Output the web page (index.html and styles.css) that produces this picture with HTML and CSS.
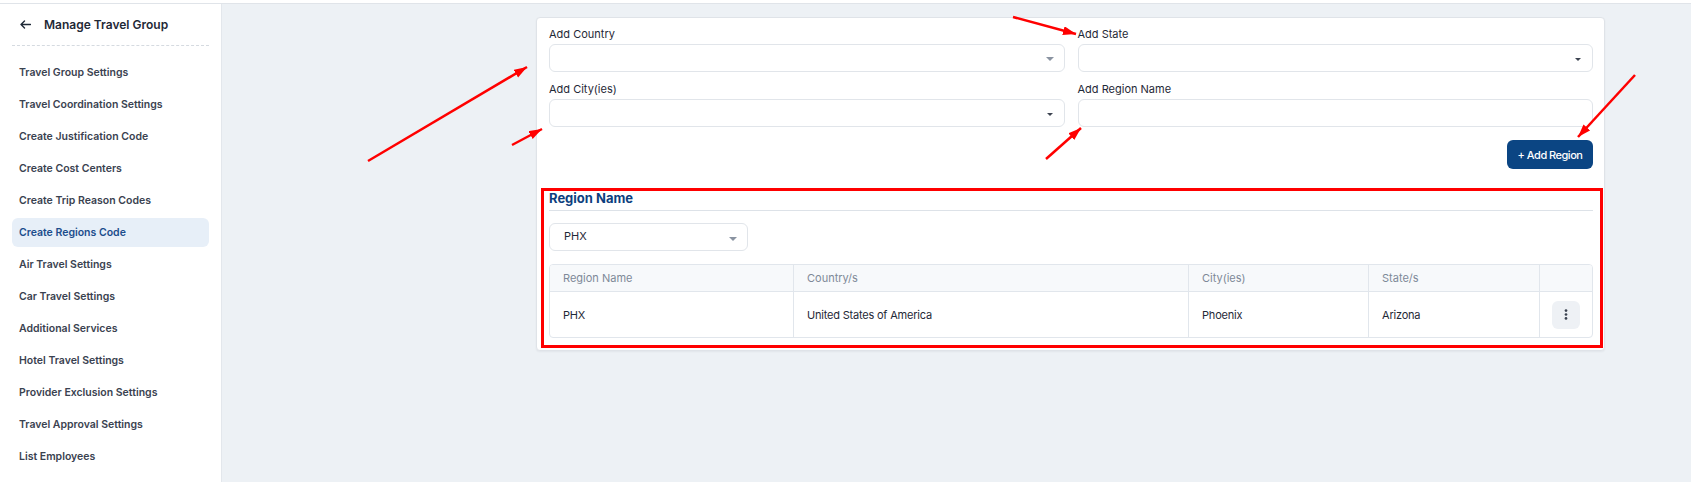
FILE: index.html
```html
<!DOCTYPE html>
<html lang="en">
<head>
    <meta charset="UTF-8">
    <meta name="viewport" content="width=device-width, initial-scale=1.0">
    <title>Create Regions Code</title>
    <link rel="stylesheet" href="styles.css">
</head>
<body>
    <div class="topbar"></div>
    <div class="layout">
        <aside class="sidebar">
            <div class="sidebar-header">
                <svg class="back-arrow" width="11" height="9" viewBox="0 0 11 9">
                    <path d="M10.5 4.5H1M4.5 1L1 4.5L4.5 8" fill="none" stroke="#1f2937" stroke-width="1.4" stroke-linecap="round" stroke-linejoin="round"/>
                </svg>
                <span class="sidebar-title">Manage Travel Group</span>
            </div>
            <nav class="menu">
                <a class="menu-item">Travel Group Settings</a>
                <a class="menu-item">Travel Coordination Settings</a>
                <a class="menu-item">Create Justification Code</a>
                <a class="menu-item">Create Cost Centers</a>
                <a class="menu-item">Create Trip Reason Codes</a>
                <a class="menu-item active">Create Regions Code</a>
                <a class="menu-item">Air Travel Settings</a>
                <a class="menu-item">Car Travel Settings</a>
                <a class="menu-item">Additional Services</a>
                <a class="menu-item">Hotel Travel Settings</a>
                <a class="menu-item">Provider Exclusion Settings</a>
                <a class="menu-item">Travel Approval Settings</a>
                <a class="menu-item">List Employees</a>
            </nav>
        </aside>

        <main class="main">
            <div class="card">
                <div class="form-grid">
                    <div class="field">
                        <label>Add Country</label>
                        <div class="select"><span></span><span class="caret"></span></div>
                    </div>
                    <div class="field">
                        <label>Add State</label>
                        <div class="select"><span></span><span class="caret caret-dark"></span></div>
                    </div>
                    <div class="field">
                        <label>Add City(ies)</label>
                        <div class="select"><span></span><span class="caret caret-dark"></span></div>
                    </div>
                    <div class="field">
                        <label>Add Region Name</label>
                        <div class="text-input"></div>
                    </div>
                </div>
                <div class="actions">
                    <button class="btn-primary">+ Add Region</button>
                </div>

                <!-- Saved regions -->
                <section class="region-list">
                    <h2 class="section-title">Region Name</h2>
                    <div class="select select-small"><span class="select-value">PHX</span><span class="caret caret-low"></span></div>
                    <div class="table-wrap">
                        <table class="region-table">
                            <thead>
                                <tr>
                                    <th class="col-name">Region Name</th>
                                    <th class="col-country">Country/s</th>
                                    <th class="col-city">City(ies)</th>
                                    <th class="col-state">State/s</th>
                                    <th class="col-actions"></th>
                                </tr>
                            </thead>
                            <tbody>
                                <tr>
                                    <td>PHX</td>
                                    <td>United States of America</td>
                                    <td>Phoenix</td>
                                    <td>Arizona</td>
                                    <td class="cell-actions">
                                        <button class="row-menu">
                                            <svg width="4" height="11" viewBox="0 0 4 11">
                                                <circle cx="2" cy="1.6" r="1.35" fill="#3a4250"/>
                                                <circle cx="2" cy="5.5" r="1.35" fill="#3a4250"/>
                                                <circle cx="2" cy="9.4" r="1.35" fill="#3a4250"/>
                                            </svg>
                                        </button>
                                    </td>
                                </tr>
                            </tbody>
                        </table>
                    </div>
                </section>
            </div>
        </main>
    </div>

    <!-- red review marks drawn over the page -->
    <svg class="annotations" width="1691" height="482" viewBox="0 0 1691 482">
        <defs>
            <marker id="head" markerUnits="userSpaceOnUse" markerWidth="14" markerHeight="10" refX="13" refY="4.5" orient="auto">
                <path d="M0 0L13 4.5L0 9z" fill="#ff0000"/>
            </marker>
        </defs>
        <rect x="542.5" y="189.5" width="1059" height="157" fill="none" stroke="#ff0000" stroke-width="3"/>
        <g stroke="#ff0000" stroke-width="2.5" marker-end="url(#head)">
            <line x1="368" y1="161" x2="527" y2="67"/>
            <line x1="512" y1="145" x2="542" y2="129"/>
            <line x1="1013" y1="17" x2="1076" y2="34"/>
            <line x1="1046" y1="159" x2="1081" y2="128"/>
            <line x1="1635" y1="75" x2="1578" y2="137"/>
        </g>
    </svg>
</body>
</html>
```

FILE: styles.css
```css
* {
    margin: 0;
    padding: 0;
    box-sizing: border-box;
    font-family: Inter, "Noto Sans", sans-serif;
}
body {
    position: relative;
    width: 1691px;
    height: 482px;
    overflow: hidden;
    background: #edf1f5;
    color: #1f2937;
}
.topbar {
    height: 4px;
    background: #fff;
    border-bottom: 1px solid #e0e4e9;
}
.layout {
    display: flex;
    height: 478px;
}

/* Sidebar */
.sidebar {
    width: 222px;
    flex-shrink: 0;
    background: #fff;
    border-right: 1px solid #e3e7ec;
}
.sidebar-header {
    display: flex;
    align-items: center;
    gap: 13px;
    height: 42px;
    margin: 0 12px;
    padding-left: 8px;
    border-bottom: 1px dashed #d5dae0;
}
.sidebar-title {
    font-size: 12px;
    font-weight: 600;
    color: #1f2937;
}
.menu {
    padding-top: 12px;
}
.menu-item {
    display: block;
    height: 29px;
    line-height: 29px;
    margin: 0 12px 3px;
    padding-left: 7px;
    border-radius: 6px;
    font-size: 10.5px;
    font-weight: 600;
    color: #3a4250;
    text-decoration: none;
}
.menu-item.active {
    background: #e7eff8;
    color: #1c4d8c;
}

/* Main */
.main {
    flex: 1;
    padding: 13px 86px 0 314px;
}
.card {
    background: #fff;
    border: 1px solid #dfe3e8;
    border-radius: 4px;
    padding: 9px 11px 12px 12px;
    box-shadow: 0 1px 2px rgba(15, 23, 42, 0.05);
}
.form-grid {
    display: grid;
    grid-template-columns: 1fr 1fr;
    column-gap: 13px;
    row-gap: 10px;
}
.field label {
    display: block;
    font-size: 11px;
    font-weight: 400;
    line-height: 14px;
    margin-bottom: 3px;
    color: #1f2937;
}
.select,
.text-input {
    display: flex;
    align-items: center;
    justify-content: space-between;
    height: 28px;
    padding: 0 10px 0 14px;
    border: 1px solid #e1e5ea;
    border-radius: 6px;
    background: #fff;
}
.caret {
    width: 0;
    height: 0;
    margin-top: 2px;
    border-left: 4px solid transparent;
    border-right: 4px solid transparent;
    border-top: 4px solid #8a93a1;
}
.caret-dark {
    margin-right: 1px;
    border-left-width: 3px;
    border-right-width: 3px;
    border-top: 3px solid #3d4451;
}
.caret-low {
    margin-top: 4px;
}
.actions {
    display: flex;
    justify-content: flex-end;
    margin-top: 13px;
}
.btn-primary {
    width: 86px;
    height: 29px;
    border: none;
    border-radius: 6px;
    background: #0b4583;
    color: #fff;
    font-size: 11px;
    font-weight: 500;
    letter-spacing: -0.5px;
    cursor: pointer;
}

/* Region list */
.region-list {
    margin-top: 21px;
}
.section-title {
    font-size: 13px;
    font-weight: 700;
    line-height: 16px;
    color: #0d3f7e;
    padding-bottom: 4px;
    border-bottom: 1px solid #dde2e8;
}
.select-small {
    width: 199px;
    margin-top: 12px;
}
.select-value {
    font-size: 11px;
    color: #1f2937;
    padding-bottom: 3px;
}
.table-wrap {
    margin-top: 13px;
    border: 1px solid #e1e6ec;
    border-radius: 4px;
    overflow: hidden;
}
.region-table {
    width: 100%;
    table-layout: fixed;
    border-collapse: separate;
    border-spacing: 0;
}
.region-table th,
.region-table td {
    text-align: left;
    padding: 0 13px;
    font-size: 11px;
    white-space: nowrap;
}
.region-table th + th,
.region-table td + td {
    border-left: 1px solid #e1e6ec;
}
.region-table th {
    height: 27px;
    background: #f7f9fb;
    border-bottom: 1px solid #e1e6ec;
    font-weight: 400;
    color: #7e8998;
}
.region-table td {
    height: 45px;
    color: #1f2937;
    letter-spacing: -0.2px;
}
.col-name { width: 243px; }
.col-country { width: 395px; }
.col-city { width: 180px; }
.col-state { width: 171px; }
.region-table td.cell-actions {
    padding: 0;
    text-align: center;
}
.row-menu {
    display: inline-flex;
    align-items: center;
    justify-content: center;
    width: 28px;
    height: 28px;
    border: none;
    border-radius: 6px;
    background: #eef1f5;
    vertical-align: middle;
}

.annotations {
    position: absolute;
    top: 0;
    left: 0;
    pointer-events: none;
}
```
